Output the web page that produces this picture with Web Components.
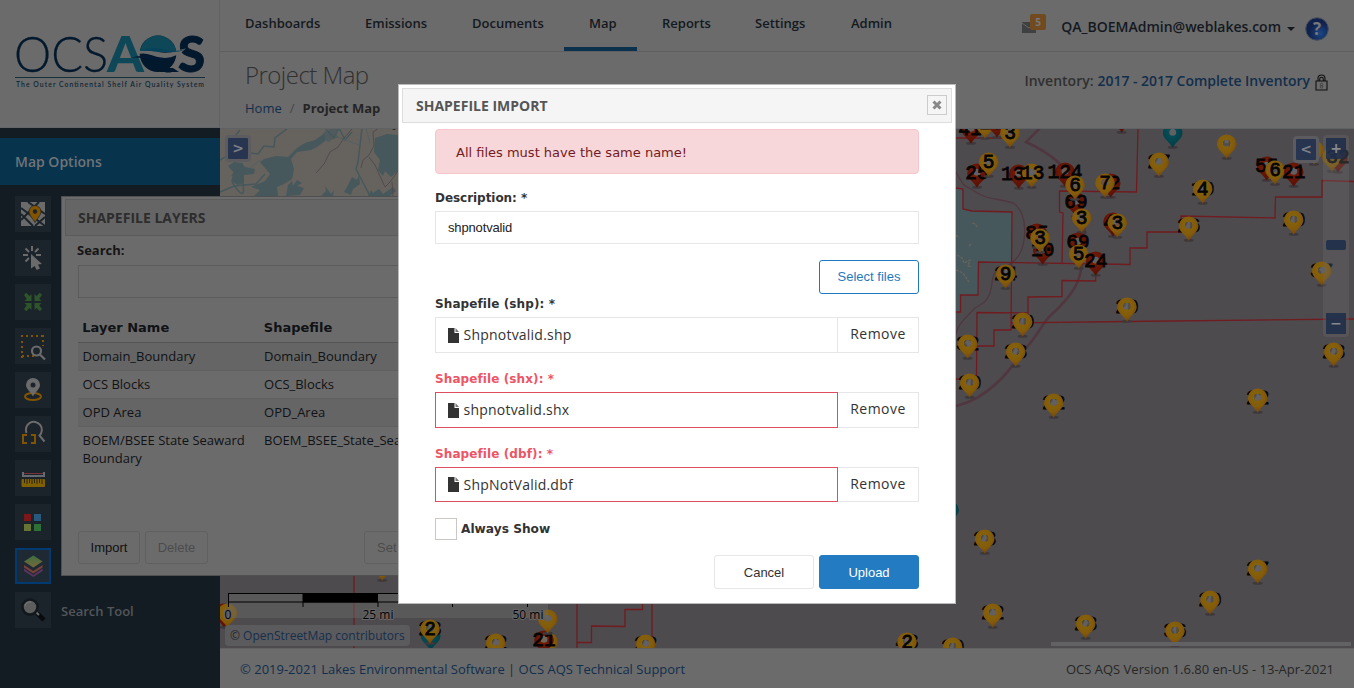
<!DOCTYPE html>
<html lang="en"><head><meta charset="utf-8"><title>Project Map</title>
<style>body{margin:0;width:1354px;height:688px;overflow:hidden;font:13px/18px "Open Sans",sans-serif;background:#6b6b6b;color:#222}</style></head>
<body><aqs-app></aqs-app>
<script>
const define=(name,html,setup)=>customElements.define(name,class extends HTMLElement{
  constructor(){super();this.attachShadow({mode:'open'}).innerHTML=html}
  connectedCallback(){if(setup)setup(this,this.shadowRoot)}
});

define('aqs-logo',`<style>:host{display:block;height:127px;border-bottom:1px solid #626669;border-right:1px solid #626262;box-sizing:border-box;width:220px;height:128px}svg{display:block}</style>
<svg width="219" height="127" viewBox="0 0 219 127">
<text x="14" y="72" font-family="Lato" font-weight="300" font-size="50" fill="#02182c" stroke="#02182c" stroke-width=".3" textLength="94" lengthAdjust="spacingAndGlyphs">OCS</text>
<text x="107" y="71.500" font-family="Lato" font-weight="900" font-size="49" fill="#0e4858" textLength="37" lengthAdjust="spacingAndGlyphs">A</text>
<text x="143" y="68" font-family="Lato" font-weight="900" font-size="34" fill="#02182c" textLength="28" lengthAdjust="spacingAndGlyphs">Q</text>
<text x="178" y="72" font-family="Lato" font-weight="900" font-size="50" fill="#02182c" stroke="#02182c" textLength="27" lengthAdjust="spacingAndGlyphs">S</text>
<circle cx="158" cy="53.800" r="18.300" fill="#02182c"/><path d="M160 68h13l6 4h-19z" fill="#02182c"/>
<path d="M139.800 52a18.300 18.300 0 0 1 36.400 0z" fill="#0e4858"/>
<path d="M138 51q10-1 20 1t19-1.500l9-2q-9 9-21 9.500-8-.5-14-3t-13-1z" fill="#6b6b6b"/>
<path d="M140 50.500q14-4 24-1t22-.5q-9 4-20 3t-26-1.500z" fill="#06425c"/>
<path d="M131 57.500q12-2.500 22-.5t23 .7q-10 3-21 1.300t-24-1.500z" fill="#021a35"/>
<path d="M15 77.500h190" stroke="#13303f"/>
<text x="16" y="87" font-family="Lato" font-weight="600" font-size="6.800" fill="#0d2635" textLength="188">The Outer Continental Shelf Air Quality System</text></svg>`);

const icons=[
`<rect x="6" y="6" width="24" height="24" fill="#6b6b6b"/><path d="M6 12L30 30M6 24L24 6M13 6l17 12M6 18l12 12M20 30l10-9" stroke="#1b232b" stroke-width="2"/><path d="M20 26.500c-2-4-6-7-6-11a6 6 0 0 1 12 0c0 4-4 7-6 11z" fill="#835400" stroke="#1b232b" stroke-width=".7"/><circle cx="20" cy="15.500" r="2.200" fill="#1b232b"/>`,
`<g stroke="#6b6b6b" stroke-width="2"><path d="M17 6v5M8 15h5M21 15h5M10.500 8.500l3.500 3.500M23.500 8.500L20 12M10.500 21.500l3.500-3.500"/></g><path d="M16 14l11 10-4 .5 2 4-3.500 1.500-1.800-4-3.700 2.500z" fill="#6b6b6b"/>`,
`<g fill="#2e542c"><path d="M9 11l2.200-2.200 3.300 3.300L16.500 10v7h-7l2.200-2.200z"/><path d="M27 11l-2.200-2.200-3.300 3.300L19.500 10v7h7l-2.200-2.200zM9 25l2.200 2.200 3.300-3.300 2 2.100v-7h-7l2.200 2.200zM27 25l-2.200 2.200-3.300-3.300-2 2.100v-7h7l-2.200 2.200z"/></g>`,
`<path d="M6 8h23M28 7v11M7 13v17M7 28h12" fill="none" stroke="#835400" stroke-width="2" stroke-dasharray="2 3"/><circle cx="21.500" cy="23" r="4.500" fill="none" stroke="#6b6b6b" stroke-width="2.200"/><path d="M25 26.500l5 5" stroke="#6b6b6b" stroke-width="2.200"/>`,
`<ellipse cx="18" cy="24.500" rx="8" ry="3.500" fill="none" stroke="#835400" stroke-width="2"/><path d="M18 24.500c-2.500-5-7-7.500-7-11.500a7 7 0 0 1 14 0c0 4-4.500 6.500-7 11.500z" fill="#6b6b6b"/><circle cx="18" cy="13" r="2.500" fill="#1b232b"/>`,
`<path d="M11.500 17a8 8 0 1 1 13 2.500l5 6" fill="none" stroke="#6b6b6b" stroke-width="2"/><path d="M12 19H8v8h4M16 19h4v8h-4" fill="none" stroke="#835400" stroke-width="2"/>`,
`<path d="M8 12v4h21v-4" fill="none" stroke="#656b70" stroke-width="2"/><path d="M9 13.500h19" stroke="#793337"/><rect x="6.500" y="19" width="23.500" height="8" rx="1" fill="#806000"/><path d="M9.500 19v4M12 19v5M14.500 19v4M17 19v5M19.500 19v4M22 19v5M24.500 19v4M27 19v5" stroke="#2b260c"/>`,
`<path d="M9 10h7v7H9z" fill="#7b1718"/><path d="M19 10h7v7h-7z" fill="#28597d"/><path d="M9 20h7v7H9z" fill="#667534"/><path d="M19 20h7v7h-7z" fill="#2e7136"/>`,
`<defs><linearGradient id="g" x2="0" y2="1"><stop stop-color="#3d7040"/><stop offset="1" stop-color="#78663a"/></linearGradient></defs><path d="M9 20.500l9.300 6.500 9.300-6.500v2.500L18.300 29 9 23z" fill="#5b345e"/><path d="M9 17l9.300 6L27.600 17v2.500l-9.300 6L9 19.500z" fill="#784039"/><path d="M18.300 7.500l9.300 6-9.300 6-9.300-6z" fill="url(#g)"/>`,
`<path d="M22 21l7 7" stroke="#090c0e" stroke-width="4.500"/><path d="M21 20l3 3" stroke="#6b6b6b" stroke-width="2"/><circle cx="15" cy="15" r="7.500" fill="#5d5d5d" stroke="#11171b" stroke-width="2.500"/><path d="M10 14a5 5 0 0 1 6-4" stroke="#777" fill="none"/>`];

define('aqs-tool',`<style>:host{display:flex;align-items:center;height:36px;gap:10px;color:#52565a;font-weight:600}i{display:block;box-sizing:border-box;width:36px;height:36px;background:#1b232b}:host([active]) i{box-shadow:inset 0 0 0 2px #003a70;background:#1f2934}svg{display:block}span{padding-top:2px}</style><i></i><span><slot></slot></span>`,(el,r)=>{r.querySelector('i').innerHTML='<svg width="36" height="36">'+icons[el.getAttribute('icon')]+'</svg>'});

define('aqs-sidebar',`<style>:host{display:flex;flex-direction:column;width:220px;height:688px;background:#6b6b6b}main{flex:1;background:#141c23;padding-top:10px}h2{margin:0 0 11px;height:47px;line-height:47px;padding-left:15px;background:#07334d;color:#707478;font-size:14px;font-weight:600}nav{display:grid;gap:8px;padding-left:15px}</style>
<aqs-logo></aqs-logo><main><h2>Map Options</h2><nav>${icons.map((_,i)=>`<aqs-tool icon="${i}"${i==8?' active':''}>${i==9?'Search Tool':''}</aqs-tool>`).join('')}</nav></main>`);

define('aqs-header',`<style>:host{display:block;height:129px;border-bottom:1px solid #5f6264;box-sizing:border-box}
.top{height:51px;box-sizing:content-box;border-bottom:1px solid #5e5f60;display:flex;justify-content:space-between}
nav{display:grid;grid-template-columns:120px 107px 117px 73px 93px 96px 60px;padding-left:25px;line-height:46px;font-weight:600;color:#14191f}
nav a{position:relative}nav .on::after{content:"";position:absolute;left:-25px;bottom:0;width:73px;height:4px;background:#0b314d}
.user{display:flex;align-items:center;padding-right:25px;height:57px}.user b{font-weight:600;font-size:14px;margin:-3px 0 0 15px;color:#14191f}
.caret{border:4px solid transparent;border-top-color:#14191f;margin:1px 10px 0 6px;border-bottom:0}
.mail{width:24px;height:20px;margin-top:-9px}.help{margin-top:1px}
.sub{display:flex;justify-content:space-between;padding:9px 25px 0}h1{margin:0;font-size:24px;line-height:28px;font-weight:300;color:#303030;letter-spacing:-.53px}
p{margin:10px 0 0;line-height:18px}p a{color:#122e4b}p i{font-style:normal;color:#454545;margin:0 8px}p b{color:#252525}
.inv{display:flex;align-items:center;height:40px;font-size:14px;color:#303030;font-weight:600}.inv a{color:#122e4b;margin-left:4px}.inv svg{margin:3px 1px 0 5px}.inv a{letter-spacing:-.03px}</style>
<div class="top"><nav><a>Dashboards</a><a>Emissions</a><a>Documents</a><a class="on">Map</a><a>Reports</a><a>Settings</a><a>Admin</a></nav>
<div class="user"><svg class="mail" viewBox="0 0 24 20"><path d="M0 8h14v11H0z" fill="#3e4042"/><path d="M0 9l7 5 7-5" fill="none" stroke="#666"/><rect x="8" width="16" height="16" rx="2" fill="#714a20"/><text x="16" y="12" text-anchor="middle" font-family="Open Sans" font-weight="700" font-size="10" fill="#777">5</text></svg><b>QA_BOEMAdmin@weblakes.com</b><span class="caret"></span><svg class="help" width="24" height="24"><defs><radialGradient id="h" cx=".65" cy=".7"><stop stop-color="#1c4784"/><stop offset="1" stop-color="#10214d"/></radialGradient></defs><circle cx="12" cy="12" r="11.300" fill="url(#h)" stroke="#48515d"/><text x="12" y="18" font-family="Open Sans" font-weight="700" font-size="17" text-anchor="middle" fill="#777">?</text></svg></div></div>
<div class="sub"><div><h1>Project Map</h1><p><a>Home</a><i>/</i><b>Project Map</b></p></div><div class="inv"><span>Inventory:</span><a>2017 - 2017 Complete Inventory</a><svg width="13" height="17"><path d="M1 7h11v9H1zM3 7V4.500a3.500 3.500 0 0 1 7 0V7M4.700 7V5a1.800 1.800 0 0 1 3.600 0v2" fill="none" stroke="#111" stroke-width="1.100"/><circle cx="6.500" cy="10.500" r="1.300" fill="none" stroke="#3c3c3c" stroke-width=".8"/><circle cx="6.500" cy="12.800" r="1.300" fill="none" stroke="#3c3c3c" stroke-width=".8"/></svg></div></div>`);

/* [colour, x, tip y, back number, front number, number dx] */
const pins=[
['r',971,143,'','41',-1],['y',985,138,'','',0],['r',997,137,'','28',-6],['y',1010,147,'','3'],
['r',977,187,'','25'],['y',988.7,176,'','5'],['r',1018.7,188,'','13',-6],['y',1031.7,187,'','13',1],['r',1065,186,'','124'],
['r',1076,216,'','69'],['y',1075,199,'','6'],['r',1110.7,197,'','2',4],['y',1105,197,'','7'],['t',1172.7,147],['r',1121.7,132],['y',1226.7,158,'9'],
['y',1159,176,'27'],['y',1202.7,203,'10','4'],['r',1266.7,180,'','55'],['y',1275,184,'','6'],['r',1293.7,186,'','21'],
['y',1314,164],['r',1338,172],['y',1332,171,'','32',6],['y',1293.7,234,'20'],['y',1188.7,240,'26'],
['r',1113,236,'','4',-4],['y',1117.3,237,'','3'],['y',1081.7,232,'','3'],['r',1042.7,264,'','10'],['r',1037,247,'','85'],['y',1040,252,'','3'],
['r',1078,256,'','69'],['y',1078.7,268,'','5'],['r',1095.7,275,'','24'],['y',1005.7,288,'24','9'],['y',1321.7,285,'37'],
['y',1127,321,'20'],['y',1022.7,336,'20'],['y',967.7,358,'32'],['y',1015.7,366,'28'],['y',969.7,397,'20'],['y',1053.7,417,'22'],['y',1257.7,412,'22'],['y',1333.7,366,'28'],
['t',949,524],['y',984.7,553,'28'],['y',992.7,627,'22'],['y',1085.7,638,'28'],['y',1175,645,'36'],['y',1210,614,'20'],['y',1257.7,583,'27'],['y',952.7,661,'20'],
['y',907,656,'43','2'],['y',645.7,658,'22'],['r',224,627],['y',227.500,627],['y',382.300,580],['t',430.700,650],['y',430,643,'28','2'],['y',495.700,657,'22'],['y',548,656],['r',544,654,'','21'],['y',547.700,633]];
const pinSvg=([c,x,y,b='',f='',dx=0])=>{const T=(s,d)=>s?`<text x="${x+d}" y="${y-7.700}">${s}</text>`:'';
return T(b,0)+`<g transform="translate(${x} ${y+.8})"><ellipse cx="0" cy="-.5" rx="5" ry="1.500" fill="#3c383b"/><circle cy="-15.500" r="3.600" fill="#6b686b" opacity=".72"/><path fill-rule="evenodd" d="M0 0C-3-6-9.800-9-9.800-14.800a9.800 9.500 0 0 1 19.600 0C9.800-9 3-6 0 0zM0-19a3.500 3.500 0 0 0 0 7 3.500 3.500 0 0 0 0-7z" fill="url(#${c})"/></g>`+T(f,dx)};

define('aqs-map',`<style>:host{display:block;position:relative;height:519px;overflow:hidden;background:#4e4b4e}svg.m{display:block}text{font:19.500px "Liberation Mono",monospace;text-anchor:middle;fill:#060505}#p text{stroke:#060505;stroke-width:.8px}
.b{position:absolute;box-sizing:border-box;border:3px solid #5c5c60;border-radius:4px;width:26px;height:27px;background:#273550;color:#7c8088;font:bold 14px/20px "DejaVu Sans";text-align:center}
.zoom{position:absolute;left:1103px;top:6px;width:26px;height:202px;box-sizing:border-box;padding:3px;border-radius:4px;background:rgba(107,107,107,.35);display:flex;flex-direction:column;justify-content:space-between;text-align:center;color:#858990;font:bold 14px/21px "DejaVu Sans"}
.zoom span{height:21px;background:rgba(31,46,75,.88)}.zoom .k{height:10px;border-radius:2px;position:relative;top:9px}
.attr{position:absolute;left:5px;top:496px;width:185px;height:21px;box-sizing:border-box;padding-left:5px;background:#5b5a5c;border-radius:4px;font-size:12px;line-height:21px;color:#282828;white-space:nowrap}.attr a{color:#162f4d}
.scale{position:absolute;left:8px;top:464px;width:320px;height:25px;background:rgba(107,107,107,.45)}.scale svg{overflow:visible}.scale text{font:12px "Open Sans";fill:#000;stroke:#666;stroke-width:2px;paint-order:stroke}
.strip{position:absolute;left:831px;top:513px;width:300px;height:4px;background:#626163}</style>
<svg class="m" width="1134" height="519" viewBox="220 129 1134 519"><defs>
<radialGradient id="y" cx=".45" cy=".35" r=".75"><stop stop-color="#87660c"/><stop offset=".55" stop-color="#835b0b"/><stop offset="1" stop-color="#713b06"/></radialGradient>
<radialGradient id="r" cx=".45" cy=".35" r=".75"><stop stop-color="#7a1d08"/><stop offset="1" stop-color="#4f0d04"/></radialGradient>
<radialGradient id="t" cx=".45" cy=".35" r=".75"><stop stop-color="#07525d"/><stop offset="1" stop-color="#033941"/></radialGradient></defs>
<path d="M220 128h180v70H220z" fill="#66635f"/>
<g fill="#46585b"><path d="M260 162l4-3 12-3 12 1 9-9 8-5 10-3 10-7v8l-8 6-6 3-14 2-6 7 3 10-2 10-8 5-7 3 1 9h-24l6-6-9-3 14-6 5-7z"/><path d="M228 166l6-4 8 1 3 4 10 2-1 5-10 1v8l-6 2-7-4 3-8z"/><path d="M375 138l12-4 11 1v36l-7 6-6-6-2 5-5-6 2-10-6-8z"/><path d="M286 196l2-11 4-4 1 5 4-6 5 3-5 3 7 2-4 7zM321 196l5-5-1-5 6 8 3-4-1 6zM347 187l5-10 5 3 2-5 1 9-7 5-2 6-7-3zM368 196l3-6 2 3 6-4 4 5 10-7 3 4-6 5z"/><path d="M324 132l6-3 8 0-3 5 4 3-6 2-5 3-5-4z" opacity=".7"/></g>
<path d="M220 160l10-6 2-14 8-10M250 153l8 1 6-8 10 1 1-9 13-10M220 192l14-6 22-2 9-10M325 128l9 10 5-10 6 12 7-8M362 128l-4 34-2 7 14 27M232 176q8-12 11 8t-11-2" fill="none" stroke="#46585b" stroke-width="1.500"/><path d="M335 136l24 9M250 168l10-8M366 129l4 14" fill="none" stroke="#53605f"/>
<path d="M316 173l8-9 6-12 8-5 6-9 8-9M361 168l2-8 6-5 5-9-1-14 6-4M369 157l6 8 10 22 5-5 8-11M392 182l1 14" fill="none" stroke="#514b4e"/><path d="M391 128q3 3 6 0" stroke="#181818" fill="none"/>
<path d="M956 188l6 1v20l10 2 40 1v51h-33v32h-18v17h-5z" fill="#46585b"/><path d="M957 255l5 3 2 5 6-3-2 6 4 1M972 223l3 1 3 4M969 246l2-2M956 270l7 3 6 9M956 235l3 3" fill="none" stroke="#66635f" stroke-width="1.300" stroke-dasharray="3 1"/>
<path d="M1040 128l-14 14c22 10 45 25 54 55 8 28 5 63-2 84-5 12-18 26-28 35-9 9-11 18-24 32-12 16-34 50-70 58" fill="none" stroke="#50373f" stroke-width="2.600"/>
<path d="M956 172c5 8 6 14 15 17 16 11 20 8 42 14 16 10 13 40 6 52-8 13-20 14-24 18-4 3-2 18-7 24-3 7-9 8-13 11-8 8-18 17-19 27" fill="none" stroke="#50373f" stroke-width="1.300"/>
<path d="M956 138h49M1138 128l-1.500 64-77-1V212l3.500 1-1 51M956 188l7 1v20l9 2 40 1-1 118h-17v16h-17M956 312h4.500v-17h17.500l.5-33 151.500 2.500V248h17V232h34V216l94 2 .5-21h46.500V180.500l32 1M1095.700 274v7l-33.700-.5v16l-34 .5v16l-51-.5-.5 66.500H956M1011 323l116-1.500 227-2.500M354 576v72M577 604v44M577 642.500h14.500V626l33.500.5V609.500h17.500V604M652 604v44" fill="none" stroke="#701b1f" stroke-width="1.300"/><g id="p"></g></svg>
<div class="b" style="left:5px;top:6px">&gt;</div><div class="b" style="left:1073px;top:7px">&lt;</div>
<div class="zoom"><span>+</span><span class="k"></span><span>−</span></div>
<div class="scale"><svg width="320" height="25"><path d="M0 .5h320M0 9h320M.5 0v14M75 9v5M150 9v5M224.500 9v5M299.500 9v5" stroke="#000"/><path d="M74.500 0H150v9.500H74.500zM225 0h75v9.500h-75z"/><text x="0" y="26">0</text><text x="150" y="26">25 mi</text><text x="300" y="26">50 mi</text></svg></div>
<div class="attr">© <a>OpenStreetMap contributors</a></div><div class="strip"></div>`,(e,r)=>{r.getElementById('p').innerHTML=pins.map(pinSvg).join('')});

define('aqs-footer',`<style>:host{display:flex;justify-content:space-between;align-items:center;height:40px;box-sizing:border-box;border-top:1px solid #5f6162;padding:0 20px;color:#262626}a{color:#122e4b}</style><span><a>© 2019-2021 Lakes Environmental Software</a> | <a>OCS AQS Technical Support</a></span><span>OCS AQS Version 1.6.80 en-US - 13-Apr-2021</span>`);

define('aqs-layers',`<style>:host{position:absolute;left:61px;top:196px;width:500px;height:380px;box-sizing:border-box;border:1px solid #505050;background:#6b6b6b;padding:2px 3px}
h3{margin:0;height:37px;box-sizing:border-box;border:1px solid #5b5b5b;background:#656565;color:#2d2d2d;font:700 14px/36px "Open Sans";padding-left:12px}
label{display:block;font-weight:700;margin:5px 0 6px 12px;color:#151515}.in{border:1px solid #5b5b5b;height:31px;margin-left:13px}
.t{display:grid;grid-template-columns:181.500px 1fr;margin:18px 0 0 13px;color:#101215}.t>*{padding:4px 0 5px 4.600px;border-bottom:1px solid #606060;line-height:18px;min-height:18px;white-space:pre-line}.t b{font-family:"DejaVu Sans";border-bottom-color:#555;padding:3px 0 5px 4.300px}.o{background:#656565}.t :nth-last-child(-n+2){border:0}
.bt{display:flex;gap:5px;margin:59px 0 0 13px}.bt span{box-sizing:border-box;height:33px;border:1px solid #606060;border-radius:3px;font:13px/32px "Liberation Sans";text-align:center;color:#4b4b4b;width:63px}.bt span:first-child{color:#111;width:62px}.bt span:last-child{margin-left:151px;text-align:left;padding-left:12px}</style>
<h3>SHAPEFILE LAYERS</h3><label>Search:</label><div class="in"></div>
<div class="t"><b>Layer Name</b><b>Shapefile</b><span class="o">Domain_Boundary</span><span class="o">Domain_Boundary</span><span>OCS Blocks</span><span>OCS_Blocks</span><span class="o">OPD Area</span><span class="o">OPD_Area</span><span>BOEM/BSEE State Seaward
Boundary</span><span>BOEM_BSEE_State_Sea</span></div>
<div class="bt"><span>Import</span><span>Delete</span><span>Set</span></div>`);

define('file-row',`<style>:host{display:block;font:13px/36px "Open Sans"}label{display:block;font:bold 12px/18px "DejaVu Sans";letter-spacing:.1px;color:#333;height:18px;padding-top:1px;margin-bottom:4px}.r{display:flex;height:36px;box-sizing:border-box}.f{box-sizing:border-box;width:403px;border:1px solid #e5e6e7;display:flex;align-items:center;padding-left:12px;font-size:14px;color:#333;letter-spacing:.22px}.f svg{margin-right:4.500px}.x{flex:1;border:1px solid #e5e6e7;border-left:0;text-align:center;line-height:32px;font-size:14px;letter-spacing:.5px;color:#333}
:host([bad]) label{color:#ed5565}:host([bad]) .f{border-color:#dd4f60}:host([last]) .r{height:35px}</style><label><slot name="label"></slot></label><div class="r"><div class="f"><svg width="11" height="15"><path d="M0 0h6.500v5H11v10H0z" fill="#333"/><path d="M7.500 0L11 4H7.500z" fill="#777"/></svg><slot></slot></div><div class="x">Remove</div></div>`);

define('import-dialog',`<style>:host{position:absolute;left:398px;top:84px;width:558px;height:520px;box-sizing:border-box;border:1px solid #bbb;background:#fff;padding:3px;color:#333}
header{height:35px;box-sizing:border-box;border:1px solid #ddd;background:#f5f5f5;display:flex;align-items:center;justify-content:space-between;padding:0 4px 0 13px;font-weight:700;font-size:14px;color:#555}.c{width:18px;height:18px;border:1px solid #ccc;display:grid;place-items:center;margin-top:-1px}
section{padding:6px 33px 0}.al{box-sizing:border-box;height:45px;border:1px solid #f5c6cb;border-radius:4px;background:#f8d7da;color:#721c24;padding-left:20px;font:13px/46px "DejaVu Sans"}
.lb{font:bold 12px/18px "DejaVu Sans";margin-top:15px;letter-spacing:-.05px}.in{margin-top:4px;height:33px;box-sizing:border-box;border:1px solid #e5e6e7;padding-left:12px;font:13px/32px "Liberation Sans";letter-spacing:-.15px;color:#222}
.bt{display:flex;justify-content:flex-end;gap:5px;margin-top:16px}.bt span{box-sizing:border-box;width:100px;height:34px;border:1px solid #e5e6e7;border-radius:3px;text-align:center;font:13px/33px "Liberation Sans"}.bt .s{border-color:#1f79c0;color:#1f79c0;line-height:31px}.bt .u{background:#237bc1;color:#fff;border-color:#237bc1}
.ck{display:flex;align-items:center;gap:4px;font:bold 12.200px/20px "DejaVu Sans";margin-top:16px}.ck i{box-sizing:border-box;width:22px;height:22px;border:1px solid #cbc7c4}
file-row+file-row{margin-top:16px}</style>
<header>SHAPEFILE IMPORT<div class="c"><svg width="10" height="10"><path d="M1.500 1.500l7 7M8.500 1.500l-7 7" stroke="#888" stroke-width="3"/></svg></div></header>
<section><div class="al">All files must have the same name!</div><div class="lb">Description: *</div><div class="in">shpnotvalid</div>
<div class="bt"><span class="s">Select files</span></div>
<file-row><span slot="label">Shapefile (shp): *</span>Shpnotvalid.shp</file-row><file-row bad><span slot="label">Shapefile (shx): *</span>shpnotvalid.shx</file-row><file-row bad last><span slot="label">Shapefile (dbf): *</span>ShpNotValid.dbf</file-row>
<div class="ck"><i></i>Always Show</div><div class="bt" style="margin-top:15px"><span>Cancel</span><span class="u">Upload</span></div></section>`);

define('aqs-app',`<style>:host{display:grid;grid-template-columns:220px 1fr;width:1354px;height:688px;position:relative;overflow:hidden}.main{display:grid;grid-template-rows:129px 519px 40px}</style><aqs-sidebar></aqs-sidebar><div class="main"><aqs-header></aqs-header><aqs-map></aqs-map><aqs-footer></aqs-footer></div><aqs-layers></aqs-layers><import-dialog></import-dialog>`);
</script></body></html>
